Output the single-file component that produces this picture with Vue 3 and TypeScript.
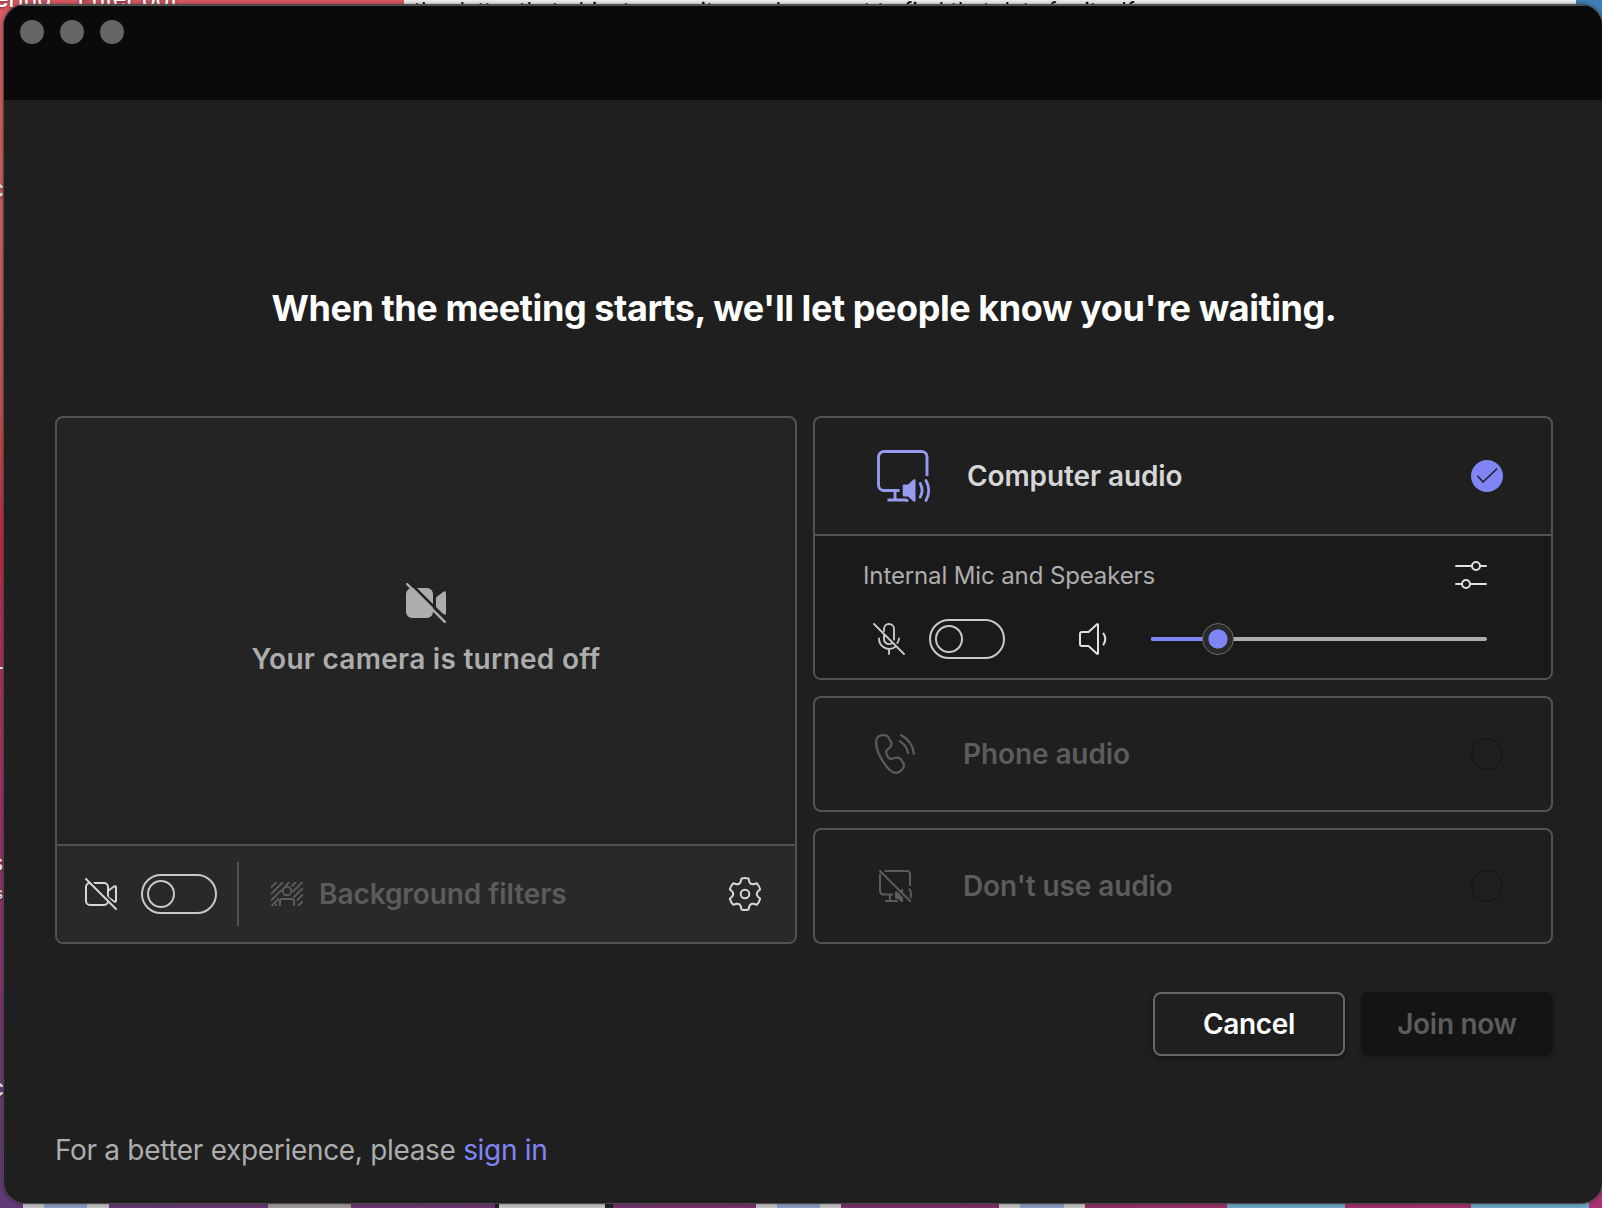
<script setup lang="ts">
import { ref } from 'vue'

interface Swatch { width: number; color: string }

const cameraOn = ref(false)
const micOn = ref(false)
const volume = ref(20)

const dock: Swatch[] = [
  { width: 23, color: 'transparent' },
  { width: 21, color: '#c6c6c6' },
  { width: 43, color: '#8b9dc6' },
  { width: 22, color: '#c6c6c6' },
  { width: 159, color: 'transparent' },
  { width: 83, color: '#a39e9b' },
  { width: 144, color: 'transparent' },
  { width: 4, color: '#222' },
  { width: 106, color: '#c4c4c4' },
  { width: 8, color: '#222' },
  { width: 143, color: 'transparent' },
  { width: 21, color: '#c6c6c6' },
  { width: 43, color: '#8b9dc6' },
  { width: 21, color: '#c6c6c6' },
  { width: 158, color: 'transparent' },
  { width: 21, color: '#c6c6c6' },
  { width: 44, color: '#8b9dc6' },
  { width: 21, color: '#c6c6c6' },
  { width: 142, color: 'transparent' },
  { width: 118, color: '#6ea8ca' },
  { width: 126, color: 'transparent' },
  { width: 118, color: '#6ea8ca' },
]

// Six-tooth gear outline around the origin
function gearPath(): string {
  const at = (x: number, y: number, deg: number) => {
    const a = (deg * Math.PI) / 180
    return `${(x * Math.cos(a) - y * Math.sin(a)).toFixed(2)} ${(x * Math.sin(a) + y * Math.cos(a)).toFixed(2)}`
  }
  let d = ''
  for (let i = 0; i < 6; i++) {
    const r = i * 60
    d += `${i ? 'L' : 'M'}${at(-4.3, -12.2, r)}L${at(-3.5, -15.5, r)}Q${at(0, -16.5, r)} ${at(3.5, -15.5, r)}L${at(4.3, -12.2, r)}`
    d += `Q${at(5.4, -9.4, r)} ${at(8.4, -9.9, r)}`
  }
  return d + 'Z'
}
const gear = gearPath()
</script>

<template>
  <div class="desktop">
    <div class="sheet">the &nbsp;latter that objects your item, when want to find that data for itself</div>
    <div class="sky"></div>
    <div class="file-label">ering.. &nbsp;Enter pdf</div>
    <span class="frag" style="top: 178px">c</span>
    <span class="frag" style="top: 437px">r</span>
    <span class="frag dash" style="top: 667px"></span>
    <span class="frag" style="top: 852px">s</span>
    <span class="frag small" style="top: 886px">s</span>
    <span class="frag" style="top: 1077px">c</span>
    <div class="dock">
      <i v-for="(s, i) in dock" :key="i" :style="{ width: s.width + 'px', background: s.color }"></i>
    </div>

    <div class="window">
      <header class="titlebar"><i></i><i></i><i></i></header>
      <main class="content">
        <h1>When the meeting starts, we'll let people know you're waiting.</h1>

        <div class="panels">
          <section class="card video">
            <div class="preview">
              <svg width="40" height="40" viewBox="0 0 40 40">
                <path fill="#adadad" d="M6 5h15a6 6 0 0 1 6 6v18a6 6 0 0 1-6 6H6a6 6 0 0 1-6-6V11a6 6 0 0 1 6-6zM30 14.5l7-5.6q3-1.5 3 1.1v20q0 2.600-3 1.100l-7-5.600z" />
                <path stroke="#242424" stroke-width="2.600" d="M3-1.200L42 37.800" />
                <path stroke="#adadad" stroke-width="2.400" stroke-linecap="round" d="M1.200 1.200l37.600 37.600" />
              </svg>
              <p>Your camera is turned off</p>
            </div>
            <footer class="video-bar">
              <svg class="cam" width="32" height="32" viewBox="0 0 32 32" fill="none" stroke="#d6d6d6" stroke-width="2">
                <path d="M5 5h14a4 4 0 0 1 4 4v14a4 4 0 0 1-4 4H5a4 4 0 0 1-4-4V9a4 4 0 0 1 4-4zM23.500 12.500l5.500-4q2-1 2 1v13q0 2-2 1l-5.500-4" />
                <path stroke="#292929" d="M2-.5l32 32" />
                <path stroke-linecap="round" d="M1 1l30 30" />
              </svg>
              <button class="toggle" :aria-pressed="cameraOn" aria-label="Camera" @click="cameraOn = !cameraOn"><i></i></button>
              <span class="rule"></span>
              <svg class="filter" width="32" height="24" viewBox="0 0 32 24" fill="none" stroke="#5c5c5c" stroke-width="1.900">
                <path d="M0 5.500L5.500 0M0 12L12 0M0 18.500L10.500 8M0 24.500L8 16.500M14 4.500L18.500 0M20.500 4.500L25 0M21.500 10L31.500 0M22.500 15.500L32 6M26 18.500L32 12.500M27 24L32 19M4.500 24L6 22.500" />
                <circle cx="16" cy="9" r="4.300" />
                <path d="M9 24v-5q0-2 2-2h10q2 0 2 2v5" />
              </svg>
              <span class="filter-label">Background filters</span>
              <svg class="gear" width="36" height="36" viewBox="-18 -18 36 36" fill="none" stroke="#d6d6d6" stroke-width="2" stroke-linejoin="round">
                <path :d="gear" />
                <circle r="4.300" />
              </svg>
            </footer>
          </section>

          <div class="audio">
            <section class="card computer">
              <div class="option">
                <svg class="monitor" width="54" height="52" viewBox="0 0 54 52" fill="none" stroke="#969bf0" stroke-width="2.900">
                  <path d="M50 26V7a5.500 5.500 0 0 0-5.500-5.500H7A5.500 5.500 0 0 0 1.500 7v28A5.500 5.500 0 0 0 7 40.500h15.500M18 41v9M10.500 50H29l2 1.500" />
                  <path fill="#969bf0" stroke="none" d="M27 34.500h4l5.500-5q2-1 2 .8v20.400q0 1.800-2 .8l-5.500-5h-4q-1.300 0-1.300-1.300v-9.400q0-1.300 1.300-1.300z" />
                  <path stroke-linecap="round" stroke-width="2.800" d="M43.300 33.500q3.600 7 0 13.500M49 30.500q5.500 10 0 20" />
                </svg>
                <span class="label">Computer audio</span>
                <svg class="check" width="32" height="32" viewBox="0 0 32 32" fill="none">
                  <circle cx="16" cy="16" r="16" fill="#7f85f5" />
                  <path d="M7 16.500l5 5.500L25.700 9" stroke="#242424" stroke-width="1.700" stroke-linecap="round" stroke-linejoin="round" />
                </svg>
              </div>
              <div class="devices">
                <div class="device-head">
                  <span>Internal Mic and Speakers</span>
                  <svg width="32" height="28" viewBox="0 0 32 28" fill="none" stroke="#e0e0e0" stroke-width="2" stroke-linecap="round">
                    <path d="M1 5h15.500M25.500 5H31M1 23h5.500M15.500 23H31" />
                    <circle cx="21" cy="5" r="4" /><circle cx="11" cy="23" r="4" />
                  </svg>
                </div>
                <div class="device-row">
                  <svg width="32" height="32" viewBox="0 0 32 32" fill="none" stroke="#c8c8c8" stroke-width="1.900" stroke-linecap="round">
                    <path d="M11 8V6a5 5 0 0 1 10 0v10.500M11 11v5a5 5 0 0 0 8.200 3.900M6 15.500a10.300 10.300 0 0 0 16.800 8M26 15.500a10 10 0 0 1-1.600 4.500M16 26v5M1 1l30 30" />
                  </svg>
                  <button class="toggle" :aria-pressed="micOn" aria-label="Microphone" @click="micOn = !micOn"><i></i></button>
                  <svg class="speaker" width="28" height="32" viewBox="0 0 28 32" fill="none" stroke="#e0e0e0" stroke-width="2" stroke-linecap="round" stroke-linejoin="round">
                    <path d="M3 9h6.500L18 1.200h1v29.600h-1L9.500 23H3q-2 0-2-2V11q0-2 2-2zM24.500 10.500q3.600 5.500 0 11" />
                  </svg>
                  <div class="slider">
                    <div class="filled" :style="{ width: volume + '%' }"></div>
                    <div class="thumb" :style="{ left: volume + '%' }"></div>
                  </div>
                </div>
              </div>
            </section>

            <section class="card choice">
              <svg class="phone" width="40" height="40" viewBox="0 0 40 40" fill="none" stroke="#5c5c5c" stroke-width="2.200" stroke-linecap="round">
                <path d="M5.500 1.500C8 .9 11.500.6 13 2.800L16 8c1 2 .8 3.300-.8 5L12 16c-1.600 1.500-1.100 3 .2 5.500 1.300 2.600 2.400 3.800 4.500 3.200l4-1c2.300-.5 3.800-.1 5 1.500l2.500 3.700c1.100 1.600 1 3.600-.2 5.200-1.700 2.400-4.500 4.900-7.500 4.800-6.500-.2-19-18-19.400-30C1 5.500 2 2.600 5.500 1.500zM26.200 1.200Q37.500 7 38.900 20M24.800 7.400Q31.500 11 33 19" />
              </svg>
              <span class="label">Phone audio</span>
              <span class="radio"></span>
            </section>

            <section class="card choice">
              <svg class="mute" width="33" height="32" viewBox="0 0 33 32" fill="none" stroke="#5c5c5c" stroke-width="2">
                <path d="M5.500 1H28a3 3 0 0 1 3 3v12M1 3.500V21a3.500 3.500 0 0 0 3.500 3.500H14M11 25v5.500M6 31h13" />
                <path fill="#5c5c5c" stroke="none" d="M17 21.500h1.200l5.800 6V32h-1.500L19 29h-2q-1 0-1-1v-5.500q0-1 1-1zM21 20.500l3-2V24z" />
                <path stroke-linecap="round" d="M1 1l30 30M30.500 19q2.200 3.500 1.100 8.500" />
              </svg>
              <span class="label">Don't use audio</span>
              <span class="radio"></span>
            </section>
          </div>
        </div>

        <div class="actions">
          <button class="btn cancel">Cancel</button>
          <button class="btn join" disabled>Join now</button>
        </div>

        <p class="signin">For a better experience, please <a>sign in</a></p>
      </main>
    </div>
  </div>
</template>

<style>
body { overflow: hidden; background: #1f1f1f; }
</style>

<style scoped>
* { box-sizing: border-box; }
.desktop {
  position: relative;
  width: 1602px;
  height: 1208px;
  overflow: hidden;
  font-family: Inter, "Liberation Sans", sans-serif;
  background: linear-gradient(180deg, #dc5965 0, #d4605a 240px, #cc5350 400px, #cb2844 540px, #b03065 700px, #a0316d 850px, #74397a 1070px, #623a78 1190px);
}
.sheet {
  position: absolute; left: 404px; top: 0; width: 1172px; height: 5px;
  overflow: hidden; padding-left: 10px; background: #eee; color: #000;
  font-size: 21px; line-height: 22px; white-space: nowrap; letter-spacing: 0.5px;
}
.sky { position: absolute; left: 1576px; top: 0; width: 26px; height: 40px; background: #3f7fb4; }
.file-label {
  position: absolute; left: -5px; top: -14px; color: #fff; white-space: nowrap;
  font-size: 23px; line-height: 26px; font-weight: 500; text-shadow: 0 1px 3px #0008;
}
.frag {
  position: absolute; left: -9px; color: #eee; font-size: 23px; line-height: 22px; font-weight: 500;
  text-shadow: 0 1px 3px #0008;
}
.frag.small { font-size: 15px; left: -5px; line-height: 16px; }
.frag.dash { left: 0; width: 4px; height: 2px; background: #eee; }
.dock {
  position: absolute; left: 0; top: 1180px; width: 1602px; height: 28px; display: flex;
  background: linear-gradient(90deg, #623a78 0, #703670 500px, #7b3068 950px, #9d3068 1200px, #a83270 1602px);
}
.dock i { display: block; flex: none; height: 100%; }

.window {
  position: absolute; left: 4px; top: 5px; width: 1598px; height: 1198px;
  display: flex; flex-direction: column; overflow: hidden;
  border-radius: 21px; background: #1f1f1f; box-shadow: 0 0 0 1px #4a4a4a, 0 0 4px 1px #0006;
}
.titlebar { display: flex; flex: none; gap: 16px; height: 95px; padding: 15px 16px; background: #0a0a0a; box-shadow: inset 0 1px #555; }
.titlebar i { width: 24px; height: 24px; border-radius: 50%; background: #656565; }
.content { padding: 0 49px 0 51px; }
h1 {
  margin: 183px 0 83px; height: 50px; line-height: 50px; text-align: center; white-space: nowrap;
  color: #fff; font-size: 36px; font-weight: 700; letter-spacing: -0.435px;
}
.panels { display: flex; gap: 16px; height: 528px; }
.card { border: 2px solid #525252; border-radius: 8px; overflow: hidden; }
.video { width: 742px; display: flex; flex-direction: column; background: #242424; }
.preview { flex: 1; display: flex; flex-direction: column; align-items: center; padding-top: 165px; }
.preview p { margin: 18px 0 0; color: #adadad; font-size: 28px; line-height: 36px; font-weight: 600; letter-spacing: 0.27px; white-space: nowrap; }
.video-bar { flex: none; display: flex; align-items: center; height: 98px; padding: 0 32px 0 28px; border-top: 2px solid #525252; background: #292929; }
.toggle { position: relative; flex: none; width: 76px; height: 40px; margin: 0 0 0 24px; padding: 4px; border: 2px solid #c8c8c8; border-radius: 20px; background: none; }
.toggle i { display: block; width: 28px; height: 28px; border: 2px solid #c8c8c8; border-radius: 50%; }
.rule { width: 2px; height: 64px; margin: 0 32px 0 20px; background: #525252; }
.filter-label { flex: 1; margin-left: 16px; color: #5c5c5c; font-size: 28px; line-height: 36px; font-weight: 600; letter-spacing: -0.07px; white-space: nowrap; }
.audio { width: 740px; display: flex; flex-direction: column; gap: 16px; }
.computer { height: 264px; }
.option { display: flex; align-items: center; height: 118px; padding: 0 48px 0 62px; border-bottom: 2px solid #525252; }
.label { flex: 1; color: #5c5c5c; font-size: 28px; line-height: 36px; font-weight: 600; letter-spacing: -0.1px; white-space: nowrap; }
.option .label { margin-left: 36px; color: #d6d6d6; }
.devices { height: 142px; background: #1a1a1a; }
.device-head { display: flex; align-items: center; justify-content: space-between; padding: 22px 64px 0 48px; height: 56px; color: #adadad; font-size: 24px; line-height: 32px; letter-spacing: -0.12px; }
.device-head span { padding-top: 2px; }
.device-row { display: flex; align-items: center; height: 67px; padding: 27px 64px 0 58px; }
.speaker { margin-left: 74px; }
.slider { position: relative; width: 336px; height: 4px; margin-left: 44px; border-radius: 2px; background: #adadad; }
.filled { height: 4px; border-radius: 2px; background: #7f85f5; }
.thumb {
  position: absolute; top: -14px; width: 32px; height: 32px; margin-left: -16px;
  border: 1px solid #6a6a6a; border-radius: 50%; background: radial-gradient(circle, #7f85f5 9.200px, #292929 9.900px);
}
.choice { display: flex; align-items: center; height: 116px; padding: 0 48px 0 60px; }
.phone { margin-right: 48px; }
.mute { margin: 0 51px 0 4px; }
.radio { width: 32px; height: 32px; border: 1.5px solid #121212; border-radius: 50%; }
.actions { display: flex; justify-content: flex-end; gap: 16px; margin-top: 48px; }
.btn { width: 192px; height: 64px; padding: 0; border-radius: 8px; font: 600 28px/36px Inter, sans-serif; letter-spacing: -0.3px; color: #fff; }
.cancel { border: 2px solid #666; background: #1f1f1f; box-shadow: 0 2px 4px #0006; }
.join { border: 0; background: #141414; color: #5c5c5c; box-shadow: 0 1px 4px #0003; }
.signin { margin: 76px 0 0; color: #adadad; font-size: 28px; line-height: 36px; letter-spacing: -0.32px; white-space: nowrap; }
.signin a { color: #7f85f5; }
</style>
